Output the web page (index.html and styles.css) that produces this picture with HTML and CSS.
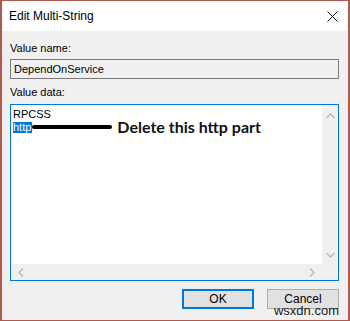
FILE: index.html
```html
<!DOCTYPE html>
<html lang="en">
<head>
    <meta charset="UTF-8">
    <title>Edit Multi-String</title>
    <link rel="stylesheet" href="styles.css">
</head>
<body>

<div class="dialog">
    <div class="titlebar">
        <span class="title">Edit Multi-String</span>
        <svg class="close" width="11" height="11" viewBox="0 0 11 11">
            <path d="M0.5 0.5 L10.5 10.5 M10.5 0.5 L0.5 10.5" stroke="#111" stroke-width="1" fill="none"/>
        </svg>
    </div>

    <div class="content">
        <label class="label first">Value name:</label>
        <div class="field">DependOnService</div>

        <label class="label">Value data:</label>
        <div class="editor">
            <div class="lines">
                <div class="line">RPCSS</div>
                <div class="line row">
                    <span class="sel">http</span>
                    <span class="arrow"></span>
                    <span class="note">Delete this http part</span>
                </div>
            </div>
            <div class="vscroll">
                <svg width="9" height="6" viewBox="0 0 9 6"><polyline points="0.5,5 4.5,1 8.5,5" stroke="#b9b9b9" stroke-width="1.4" fill="none"/></svg>
                <svg width="9" height="6" viewBox="0 0 9 6"><polyline points="0.5,1 4.5,5 8.5,1" stroke="#b9b9b9" stroke-width="1.4" fill="none"/></svg>
            </div>
            <div class="hscroll">
                <svg width="6" height="9" viewBox="0 0 6 9"><polyline points="5,0.5 1,4.5 5,8.5" stroke="#b9b9b9" stroke-width="1.4" fill="none"/></svg>
                <svg width="6" height="9" viewBox="0 0 6 9"><polyline points="1,0.5 5,4.5 1,8.5" stroke="#b9b9b9" stroke-width="1.4" fill="none"/></svg>
            </div>
            <div class="corner"></div>
        </div>

        <div class="buttons">
            <button class="btn default">OK</button>
            <button class="btn">Cancel</button>
        </div>
    </div>

    <span class="watermark">wsxdn.com</span>
</div>

</body>
</html>
```

FILE: styles.css
```css
body {
    margin: 0;
    font-family: 'Liberation Sans', Arial, sans-serif;
    font-size: 11px;
    color: #000;
}
.dialog {
    position: relative;
    width: 350px;
    height: 321px;
    box-sizing: border-box;
    border: 1px solid #b25a4e;
    border-left-width: 2px;
    border-right-width: 2px;
    background-color: #f0f0f0;
}
.titlebar {
    height: 30px;
    background-color: #fff;
    display: flex;
    align-items: center;
    justify-content: space-between;
    padding: 0 10px 0 7px;
}
.title {
    font-size: 12px;
}
.close {
    display: block;
}
.content {
    padding: 0 9px 0 8px;
}
.label {
    display: block;
    height: 16px;
    line-height: 16px;
    margin-top: 5px;
    color: #000;
}
.label.first {
    margin-top: 9px;
}
.field {
    margin-top: 3px;
    height: 20px;
    box-sizing: border-box;
    border: 1px solid #7a7a7a;
    padding-left: 3px;
    line-height: 18px;
}
.editor {
    margin-top: 4px;
    height: 177px;
    box-sizing: border-box;
    border: 1px solid #0078d7;
    background-color: #fff;
    display: grid;
    grid-template-columns: 1fr 16px;
    grid-template-rows: 1fr 16px;
}
.lines {
    padding: 3px 0 0 2px;
}
.line {
    height: 12px;
    line-height: 12px;
}
.row {
    display: flex;
    align-items: center;
    margin-top: 1px;
}
.sel {
    background-color: #0078d7;
    color: #fff;
    line-height: 11px;
    padding: 0 1px 0 0;
}
.arrow {
    width: 80px;
    height: 4px;
    border-radius: 2px;
    background-color: #000;
    margin-left: 0;
}
.note {
    font-family: Lato, sans-serif;
    font-weight: 700;
    font-size: 16px;
    color: #111;
    margin-left: 5px;
    white-space: nowrap;
}
.vscroll {
    background-color: #f0f0f0;
    display: flex;
    flex-direction: column;
    align-items: center;
    justify-content: space-between;
    padding: 8px 0 6px;
}
.hscroll {
    background-color: #f0f0f0;
    display: flex;
    align-items: center;
    justify-content: space-between;
    padding: 0 7px 0 7px;
}
.vscroll svg, .hscroll svg {
    display: block;
}
.corner {
    background-color: #f0f0f0;
}
.buttons {
    margin-top: 8px;
    display: flex;
    justify-content: flex-end;
    gap: 13px;
}
.btn {
    width: 72px;
    height: 20px;
    box-sizing: border-box;
    background-color: #e1e1e1;
    border: 1px solid #adadad;
    font-family: 'Liberation Sans', Arial, sans-serif;
    font-size: 12px;
    color: #000;
    padding: 0;
}
.btn.default {
    border: 2px solid #0078d7;
}
.watermark {
    position: absolute;
    right: 9px;
    bottom: 2px;
    font-family: 'Liberation Sans', Arial, sans-serif;
    font-size: 13px;
    color: #1a1a1a;
}
```
